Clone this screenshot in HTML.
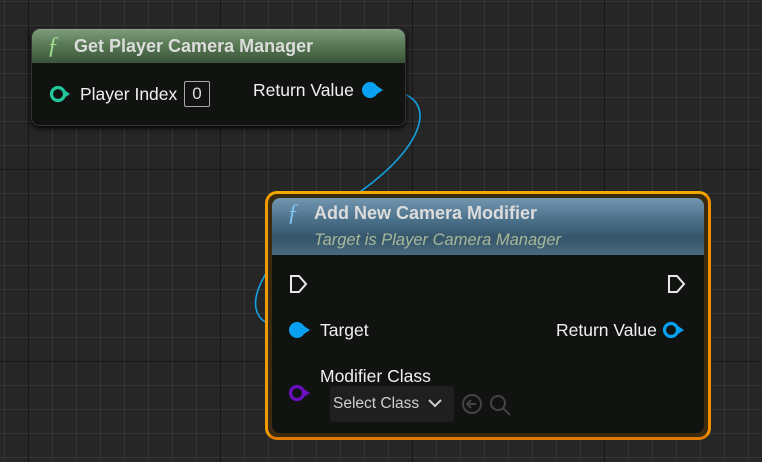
<!DOCTYPE html>
<html><head><style>
body{margin:0;width:762px;height:462px;overflow:hidden;position:relative;font-family:"Liberation Sans",sans-serif;
background-color:#262626;
background-image:
linear-gradient(90deg,#171717 1px,transparent 1px),
linear-gradient(0deg,#171717 1px,transparent 1px),
linear-gradient(90deg,#353535 1px,transparent 1px),
linear-gradient(0deg,#353535 1px,transparent 1px);
background-size:192px 192px,192px 192px,24px 24px,24px 24px;
background-position:28px 0,0 170px,4px 0,0 2px;}
.n{position:absolute;border-radius:8px;}
.t{position:absolute;color:#f0f0f0;font-size:17px;white-space:nowrap}
</style></head><body>
<svg width="762" height="462" style="position:absolute;left:0;top:0">
<path d="M380,90 C445,90 430,150 340,205 C260,255 230,320 280,327 L297,330" stroke="#13a0e0" stroke-width="1.6" fill="none"/>
</svg>
<div class="n" style="left:31px;top:28px;width:373px;height:96px;background:#111311;box-shadow:0 2px 6px #000;border:1px solid #333;">
 <div style="height:34px;border-radius:8px 8px 0 0;background:linear-gradient(180deg,#7f9c7c 0%,#5a7a56 45%,#3a553a 100%);"></div>
</div>
<div class="t" style="left:47px;top:33px;color:#9fdc90;font-style:italic;font-family:'Liberation Serif',serif;font-size:24px">ƒ</div>
<div class="t" style="left:74px;top:36px;font-weight:bold;color:#dcdcdc;font-size:18px">Get Player Camera Manager</div>
<svg style="position:absolute;left:48px;top:84px" width="26" height="20"><circle cx="10" cy="10" r="6.5" fill="none" stroke="#22c79a" stroke-width="3.2"/><path d="M17,6.5 L22,10 L17,13.5Z" fill="#22c79a"/></svg>
<div class="t" style="left:80px;top:84px;font-size:17.5px">Player Index</div>
<div style="position:absolute;left:184px;top:81px;width:24px;height:24px;border:1px solid #aaa;border-radius:2px;color:#ddd;font-size:17px;text-align:center;line-height:24px">0</div>
<div class="t" style="left:253px;top:80px;font-size:17.5px">Return Value</div>
<svg style="position:absolute;left:360px;top:80px" width="26" height="20"><circle cx="10" cy="10" r="8" fill="#08a0f0"/><path d="M17,6 L23,10 L17,14Z" fill="#08a0f0"/></svg>

<div class="n" style="left:265px;top:191px;width:440px;height:243px;border:3px solid #f0a000;border-color:#f2a800 #f09000 #e07a00 #f09c00;border-radius:12px;background:#3a2a10;"></div>
<div class="n" style="left:272px;top:198px;width:432px;height:235px;background:#111311;border-radius:8px;">
 <div style="height:57px;border-radius:8px 8px 0 0;background:linear-gradient(180deg,#7396b0 0%,#4a6f88 40%,#35556b 70%,#4a6a80 100%);"></div>
</div>
<div class="t" style="left:287px;top:200px;color:#7ec0f0;font-style:italic;font-family:'Liberation Serif',serif;font-size:24px">ƒ</div>
<div class="t" style="left:314px;top:203px;font-weight:bold;color:#dcdcdc;font-size:18px">Add New Camera Modifier</div>
<div class="t" style="left:314px;top:231px;font-style:italic;color:#a8b898;font-size:16.5px">Target is Player Camera Manager</div>
<svg style="position:absolute;left:288px;top:273px" width="22" height="22"><path d="M3,3 L11,3 L18,11 L11,19 L3,19Z" fill="none" stroke="#e8e8e8" stroke-width="2"/></svg>
<svg style="position:absolute;left:666px;top:273px" width="22" height="22"><path d="M3,3 L11,3 L18,11 L11,19 L3,19Z" fill="none" stroke="#e8e8e8" stroke-width="2"/></svg>
<svg style="position:absolute;left:287px;top:320px" width="26" height="20"><circle cx="10" cy="10" r="8" fill="#08a0f0"/><path d="M17,6 L23,10 L17,14Z" fill="#08a0f0"/></svg>
<div class="t" style="left:320px;top:320px;font-size:17.5px">Target</div>
<div class="t" style="left:556px;top:320px;font-size:17.5px">Return Value</div>
<svg style="position:absolute;left:661px;top:320px" width="26" height="20"><circle cx="10" cy="10" r="6.5" fill="none" stroke="#08a0f0" stroke-width="3.2"/><path d="M17,6 L23,10 L17,14Z" fill="#08a0f0"/></svg>
<div class="t" style="left:320px;top:366px;font-size:17.5px">Modifier Class</div>
<svg style="position:absolute;left:287px;top:383px" width="26" height="20"><circle cx="10" cy="10" r="6.5" fill="none" stroke="#6a10c0" stroke-width="3.2"/><path d="M17,6 L23,10 L17,14Z" fill="#6a10c0"/></svg>
<div style="position:absolute;left:330px;top:386px;width:124px;height:36px;background:#1e1f1e;border-radius:3px"></div>
<div class="t" style="left:333px;top:395px;font-size:15.5px;color:#cfcfcf">Select Class</div>
<svg style="position:absolute;left:427px;top:396px" width="16" height="14"><path d="M2,4 L8,10 L14,4" fill="none" stroke="#ccc" stroke-width="2"/></svg>
<svg style="position:absolute;left:460px;top:392px" width="54" height="26"><circle cx="12" cy="12" r="9" fill="none" stroke="#444" stroke-width="2"/><path d="M16,12 H8 M11,8 L7,12 L11,16" fill="none" stroke="#444" stroke-width="2"/><circle cx="38" cy="11" r="7" fill="none" stroke="#444" stroke-width="2"/><path d="M43,16 L50,23" stroke="#444" stroke-width="2"/></svg>
</body></html>
